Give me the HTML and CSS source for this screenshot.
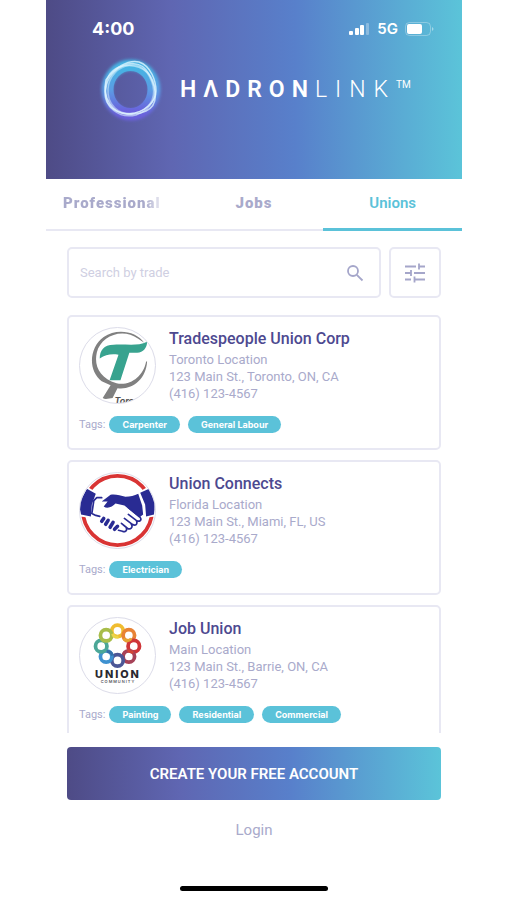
FILE: index.html
```html
<!DOCTYPE html>
<html lang="en">
<head>
<meta charset="utf-8">
<meta name="viewport" content="width=device-width, initial-scale=1">
<title>HadronLink – Unions</title>
<link rel="stylesheet" href="styles.css">
</head>
<body>
<div class="screen">
  <header class="header">
    <div class="status">
      <span class="time">4:00</span>
      <div class="status-right">
        <svg width="21" height="12" viewBox="0 0 21 12" fill="#fff" aria-hidden="true">
          <rect x="0" y="8" width="4" height="4" rx="1"/><rect x="6" y="5" width="4" height="7" rx="1"/><rect x="11" y="2" width="4" height="10" rx="1"/><rect x="17" y="0" width="3" height="12" rx="1" opacity=".3"/>
        </svg>
        <span class="network">5G</span>
        <svg width="29" height="14" viewBox="0 0 29 14" aria-hidden="true">
          <rect x=".5" y=".5" width="25" height="13" rx="4" fill="none" stroke="#fff" stroke-opacity=".3"/><rect x="2" y="2" width="15" height="10" rx="2" fill="#fff"/><path d="M27 5c2 1 2 3 0 4z" fill="#fff" opacity=".45"/>
        </svg>
      </div>
    </div>
    <div class="brand">
      <svg class="brand-ring" width="64" height="66" viewBox="0 0 64 66" fill="none" aria-hidden="true">
        <defs>
          <linearGradient id="ring" x1="0" y1="0" x2="0" y2="1"><stop offset="0" stop-color="#45b4e3"/><stop offset=".5" stop-color="#5b9de4"/><stop offset="1" stop-color="#6a60dc"/></linearGradient>
          <filter id="glow" x="-20%" y="-20%" width="140%" height="140%"><feGaussianBlur stdDeviation="1.6"/></filter>
          <filter id="soft" x="-20%" y="-20%" width="140%" height="140%"><feGaussianBlur stdDeviation=".4"/></filter>
        </defs>
        <ellipse cx="32" cy="33" rx="24" ry="25" stroke="url(#ring)" stroke-width="11" filter="url(#glow)"/>
        <ellipse cx="31.500" cy="32.500" rx="20.500" ry="22" stroke="url(#ring)" stroke-width="7"/>
        <g stroke="#e0f6ff" stroke-width="1.5" filter="url(#soft)">
          <path d="M7 23C14 12 29 2 40 5c12 4 17 19 17 29 0 11-12 22-27 23C14 58 3 41 7 23z" opacity=".8"/>
          <path d="M15 15C28 3 43 4 50 17c8 15 10 31-3 37-15 7-37 2-40-13-2-9 1-19 8-26z" opacity=".75"/>
          <path d="M20 10c14-4 28 0 34 14 6 15-2 29-17 34C20 62 5 50 6 34 7 22 10 14 20 10z" opacity=".6"/>
          <path d="M31 8c12-2 20 9 23 21 3 14-5 24-18 27C19 59 8 47 9 32 10 19 19 10 31 8z" opacity=".5"/>
        </g>
      </svg>
      <div class="wordmark"><strong>HΛDRON</strong><span>LINK</span><sup>TM</sup></div>
    </div>
  </header>

  <nav class="tabs">
    <a class="tab tab-cut" href="#professionals"><span>Professional</span></a>
    <a class="tab" href="#jobs">Jobs</a>
    <a class="tab tab-active" href="#unions" aria-current="page">Unions</a>
  </nav>

  <main class="content">
    <form class="search">
      <label class="search-box">
        <input type="search" placeholder="Search by trade" aria-label="Search by trade">
        <svg width="18" height="18" viewBox="0 0 18 18" fill="none" stroke="#a5a6ca" stroke-width="1.8" aria-hidden="true"><circle cx="7" cy="7" r="5"/><path d="M10.8 10.8L16.5 16.5"/></svg>
      </label>
      <button class="filter" type="button" aria-label="Filters">
        <svg width="20" height="20" viewBox="0 0 20 20" fill="none" stroke="#a5a6ca" stroke-width="1.8" aria-hidden="true"><path d="M0 3.500h11M14 3.500h6M14 .5v6M0 10h6M6 7v6M9 10h11M0 16.500h6M9 16.500h11M9.500 13.500v6"/></svg>
      </button>
    </form>

    <article class="card">
      <div class="card-main">
        <svg class="avatar" viewBox="0 0 76 76" role="img" aria-label="Tradespeople Union Corp logo">
          <path fill="#808080" d="M65 15C57 3 37 0 24 9 9 20 8 43 22 54l9 4-8 13c3 2 7 0 10 0l5-10c15 2 29-9 30-27h-1c-3 16-17 25-30 22C20 51 14 38 17 25 21 8 43-1 59 11z"/>
          <path fill="#38a38f" d="M20 31c0-8 4-14 14-14 12-1 24 2 34-3 0 6-4 11-10 11h-8l-9 28H30l9-26c-8-1-13 0-19 4z"/>
          <text x="35" y="77" fill="#555" font-family="Inter, sans-serif" font-size="9" font-weight="700" font-style="italic">Toro</text>
        </svg>
        <div class="details">
          <h2>Tradespeople Union Corp</h2>
          <p>Toronto Location</p><p>123 Main St., Toronto, ON, CA</p><p>(416) 123-4567</p>
        </div>
      </div>
      <div class="tags"><span>Tags:</span><b class="tag">Carpenter</b><b class="tag">General Labour</b></div>
    </article>

    <article class="card">
      <div class="card-main">
        <svg class="avatar" viewBox="0 0 76 76" role="img" aria-label="Union Connects logo">
          <circle cx="38" cy="38" r="35" fill="none" stroke="#d93434" stroke-width="3.800"/>
          <path fill="#fff" d="M0 14l7 0 9 5h44l9-5 7 0v30l-8 1H8l-8-1z"/>
          <path fill="#292b93" d="M7 16l9 5-4 11-1 12-10-2-2-11zM61 20l9-4 6 14-1 12-8 2-1-12z"/>
          <path fill="#292b93" d="M22 29l9-7c5-1 10 1 15 2 5 0 9-1 13-3l4 12 1 9-4 3-15-12-9-2c-3 3-8 6-12 3l4-5z"/>
          <path fill="none" stroke="#292b93" stroke-width="1.700" stroke-linecap="round" stroke-linejoin="round" d="M22 25l-5 0-3 3-2 13 4 2 4 1M49 35l12 10c2 3-1 5-4 3l-8-6M57 48c2 4-1 6-4 4l-8-6M52 52c2 3-1 6-4 4l-6-5M47 56c1 3-2 4-4 3l-4-1"/>
          <path fill="none" stroke="#292b93" stroke-width="3.600" stroke-linecap="round" d="M24 46l-2 3M28.500 48l-2.500 4M33.500 50l-3 5M38 54l-3 3"/>
        </svg>
        <div class="details">
          <h2>Union Connects</h2>
          <p>Florida Location</p><p>123 Main St., Miami, FL, US</p><p>(416) 123-4567</p>
        </div>
      </div>
      <div class="tags"><span>Tags:</span><b class="tag">Electrician</b></div>
    </article>

    <article class="card">
      <div class="card-main">
        <svg class="avatar" viewBox="0 0 76 76" role="img" aria-label="Union Community logo">
          <g fill="none" stroke-width="3.800">
            <circle cx="38" cy="13" r="5.800" stroke="#f0bd30"/><circle cx="49.500" cy="17.500" r="5.800" stroke="#e88335"/><circle cx="54.500" cy="28.500" r="5.800" stroke="#cf3538"/><circle cx="49.500" cy="39" r="5.800" stroke="#a64258"/><circle cx="38" cy="43" r="5.800" stroke="#4c5796"/><circle cx="26.500" cy="39" r="5.800" stroke="#3e91d0"/><circle cx="21.500" cy="28.500" r="5.800" stroke="#4ba797"/><circle cx="26.500" cy="17.500" r="5.800" stroke="#a8bd4a"/>
            <g stroke-width="3"><path stroke="#ecd447" d="M33 16c1 3 3 4 6 3"/><path stroke="#e5a634" d="M44 21c3 3 6 2 8 0"/><path stroke="#d54436" d="M49 32c0 2 3 3 5 2"/><path stroke="#356fa8" d="M27 34c3 0 5 1 6 4"/></g>
          </g>
          <text x="38.500" y="61" text-anchor="middle" fill="#292930" font-family="Inter, sans-serif" font-size="11" font-weight="800" letter-spacing="2">UNION</text>
          <text x="38.500" y="66" text-anchor="middle" fill="#55555c" font-family="Inter, sans-serif" font-size="4" font-weight="600" letter-spacing="1">COMMUNITY</text>
        </svg>
        <div class="details">
          <h2>Job Union</h2>
          <p>Main Location</p><p>123 Main St., Barrie, ON, CA</p><p>(416) 123-4567</p>
        </div>
      </div>
      <div class="tags"><span>Tags:</span><b class="tag">Painting</b><b class="tag">Residential</b><b class="tag">Commercial</b></div>
    </article>
  </main>

  <footer class="footer">
    <button class="create" type="button">CREATE YOUR FREE ACCOUNT</button>
    <a class="login" href="#login">Login</a>
    <div class="home-bar"></div>
  </footer>
</div>
</body>
</html>
```
FILE: styles.css
```css
:root {
  --line: #e8e8f3;
  --muted: #a9aacb;
  --teal: #5bc2d9;
  --indigo: #4d4990;
  --brand-gradient: linear-gradient(90deg, #4e4b86 0%, #5f66b2 30%, #5880cb 60%, #5bc4d9 100%);
}
* { box-sizing: border-box; }
body {
  margin: 0;
  background: #fff;
  color: var(--muted);
  font-family: Roboto, "Noto Sans", sans-serif;
}
h2, p { margin: 0; }
a { color: inherit; text-decoration: none; }
svg { flex: none; }

.screen {
  display: flex;
  flex-direction: column;
  height: 100vh;
  margin: 0 45px 0 46px;
}
.header {
  flex: none;
  padding: 17px 0 56px;
  background: var(--brand-gradient);
  color: #fff;
}
.status {
  display: flex;
  justify-content: space-between;
  align-items: center;
  height: 23px;
  padding: 0 28px 0 46px;
  font-family: Inter, sans-serif;
}
.time { font-size: 18px; font-weight: 700; }
.status-right { display: flex; align-items: center; gap: 7px; }
.network { font-size: 15px; font-weight: 600; }
.brand {
  display: flex;
  align-items: center;
  padding: 17px 0 0 53px;
  gap: 17px;
}
.wordmark {
  display: flex;
  align-items: center;
  font-size: 23px;
  line-height: 28px;
}
.wordmark strong { font-weight: 600; letter-spacing: 7px; }
.wordmark span { font-weight: 300; letter-spacing: 8px; }
.wordmark sup { align-self: flex-start; font-size: 10px; line-height: 18px; }

.tabs {
  flex: none;
  display: grid;
  grid-template-columns: repeat(3, 1fr);
  height: 52px;
}
.tab {
  display: flex;
  align-items: center;
  justify-content: center;
  padding-bottom: 2px;
  border-bottom: 2px solid var(--line);
  font-size: 15px;
  font-weight: 900;
  letter-spacing: 1px;
}
.tab-cut { justify-content: flex-start; padding-left: 17px; }
.tab-cut span {
  mask-image: linear-gradient(90deg, #000 84%, rgba(0, 0, 0, .4) 96%);
}
.tab-active {
  border-bottom: 3px solid var(--teal);
  color: var(--teal);
  font-weight: 600;
  letter-spacing: 0;
}

.content {
  flex: 1;
  min-height: 0;
  overflow: hidden;
  padding: 16px 21px 0;
}
.search { display: flex; gap: 8px; margin-bottom: 17px; }
.search-box {
  flex: 1;
  display: flex;
  align-items: center;
  height: 51px;
  padding: 0 15px 0 11px;
  border: 2px solid var(--line);
  border-radius: 5px;
}
.search input {
  flex: 1;
  min-width: 0;
  padding: 0;
  border: 0;
  outline: 0;
  background: none;
  font: 13px Roboto, sans-serif;
}
.search input::placeholder { color: #cfcfe2; }
.filter {
  display: grid;
  place-items: center;
  width: 52px;
  padding: 0;
  border: 2px solid var(--line);
  border-radius: 5px;
  background: none;
}

.card {
  margin-bottom: 10px;
  padding: 10px;
  border: 2px solid var(--line);
  border-radius: 5px;
  height: 135px;
}
.card-main { display: flex; gap: 13px; }
.avatar {
  width: 77px;
  height: 77px;
  border: 1px solid #dcdce9;
  border-radius: 50%;
}
.details { padding-top: 1px; }
.details h2 {
  margin-bottom: 2px;
  color: var(--indigo);
  font-size: 16px;
  line-height: 21px;
  font-weight: 500;
}
.details p { font-size: 13px; line-height: 17px; }
.tags {
  display: flex;
  align-items: center;
  gap: 8px;
  margin-top: 12px;
  font-size: 11px;
  line-height: 17px;
}
.tags span { margin-right: -4px; }
.tag {
  padding: 0 13px;
  border-radius: 9px;
  background: var(--teal);
  color: #fff;
  font-family: Inter, sans-serif;
  font-size: 9px;
  font-weight: 700;
}

.footer {
  flex: none;
  display: flex;
  flex-direction: column;
  align-items: center;
  padding: 14px 21px 9px;
}
.create {
  align-self: stretch;
  height: 53px;
  border: 0;
  border-radius: 4px;
  background: var(--brand-gradient);
  color: #fff;
  font: 600 15px Roboto, sans-serif;
}
.login { margin-top: 20px; font-size: 15px; line-height: 20px; }
.home-bar {
  width: 36%;
  min-width: 148px;
  height: 5px;
  margin-top: 46px;
  border-radius: 3px;
  background: #000;
}
```
